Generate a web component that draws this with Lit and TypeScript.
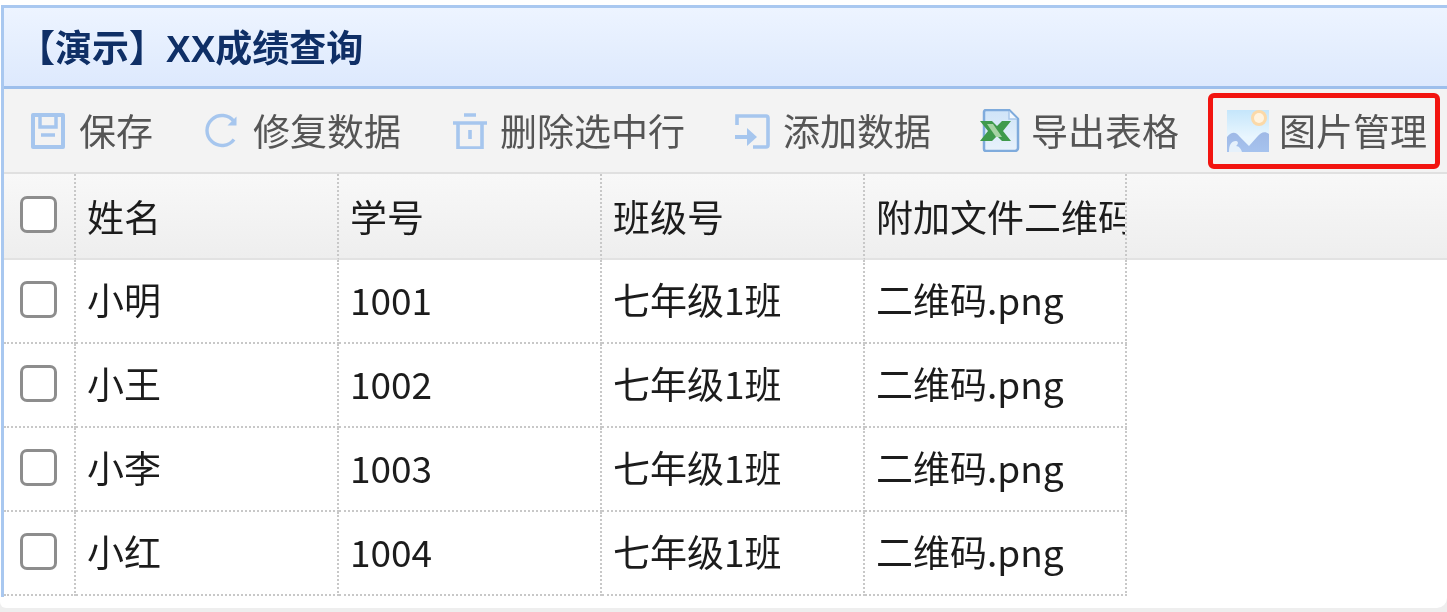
import { LitElement, html, css, svg } from "lit";
import { customElement } from "lit/decorators.js";

const blue = "#a6c6ee";
const icons: Record<string, unknown> = {
  save: svg`<svg class="ic" width="36" height="36" viewBox="0 0 36 36" fill="none" stroke="${blue}" stroke-width="4"><path d="M3 2h30v32H3z" stroke-linejoin="round"/><path d="M10 3v11h16V3" stroke-width="3.5"/><path d="M11 22h14" stroke-width="3.5"/></svg>`,
  refresh: svg`<svg class="ic" width="36" height="36" viewBox="0 0 36 36" fill="none" stroke="${blue}" stroke-width="3.4"><path d="M30 26.500a15 15 0 1 1 0-18"/><path d="M32.500 3.500v9h-9z" fill="${blue}" stroke="none"/></svg>`,
  trash: svg`<svg class="ic" width="36" height="36" viewBox="0 0 36 36" fill="none" stroke="${blue}" stroke-width="3.6"><path d="M12 2h12M1 10h34"/><path d="M6 10v25h24V10"/><path d="M18 17v9"/></svg>`,
  add: svg`<svg class="ic" width="36" height="36" viewBox="0 0 36 36" fill="none" stroke="${blue}" stroke-width="3.6"><path d="M3 12V3h29a2 2 0 0 1 2 2v27a2 2 0 0 1-2 2H19"/><path d="M1 24h15" stroke-width="4"/><path d="M13 15l10 9-10 9z" fill="${blue}" stroke="none"/></svg>`,
  excel: svg`<svg class="ic" width="41" height="43" viewBox="0 0 41 43" fill="none"><defs><linearGradient id="doc" x1="0" y1="0" x2="0" y2="1"><stop offset="0" stop-color="#cfe4f8"/><stop offset="1" stop-color="#e8f2fb"/></linearGradient></defs><path d="M5 3a2 2 0 0 1 2-2h23l9 9v29a3 3 0 0 1-3 3H7a2 2 0 0 1-2-2z" fill="url(#doc)" stroke="#7fabdc" stroke-width="2.500" stroke-linejoin="round"/><path d="M30 2v8h8" fill="#f2f8ff" stroke="#a9c8ea" stroke-width="1.500"/><path d="M1 12h12l5 5 5-5h9l-8 10 8 10h-9l-5-5-5 5H1l8-10z" fill="#3f9a4c"/><path d="M8 15h6l9 13h-6z" fill="#a6d3a4"/></svg>`,
  image: svg`<svg class="ic" width="42" height="42" viewBox="0 0 42 42"><defs><linearGradient id="sky" x1="0" y1="0" x2="0" y2="1"><stop offset="0" stop-color="#c5e6fb"/><stop offset=".65" stop-color="#e9f6fe"/></linearGradient><linearGradient id="mt" x1="0" y1="0" x2="0" y2="1"><stop offset="0" stop-color="#9fb9e6"/><stop offset="1" stop-color="#a6c3ee"/></linearGradient></defs><rect width="42" height="42" fill="url(#sky)"/><circle cx="32" cy="8" r="8" fill="#fbd9a8"/><circle cx="32" cy="8" r="5" fill="#fff3df"/><path d="M0 27c5-6 9-5 13 0l9 9 8-9c4-5 8-6 12-3v18H0z" fill="url(#mt)"/><path d="M2 42c0-7 2-11 7-11 3 0 2 4 0 5 3 0 5 3 6 6z" fill="#e6f1fb"/></svg>`,
};

const rows = [
  ["小明", "1001"],
  ["小王", "1002"],
  ["小李", "1003"],
  ["小红", "1004"],
];

@customElement("app-root")
export class AppRoot extends LitElement {
  static styles = css`
    :host {
      display: block;
      width: 1447px;
      height: 612px;
      overflow: hidden;
      background: linear-gradient(#fff 590px, #eeeeee 590px);
      font-family: "Noto Sans CJK SC", "Noto Sans", sans-serif;
      color: #1c1c1c;
      filter: blur(0.55px);
    }
    .panel {
      box-sizing: border-box;
      height: 603px;
      margin-top: 5px;
      padding-left: 4px;
      background: linear-gradient(#a9c8f0, #a9c8f0) 1px 0 / 3px 592px no-repeat, #fff;
      border-bottom-right-radius: 10px;
      border-bottom-left-radius: 6px;
    }
    .title {
      box-sizing: border-box;
      height: 84px;
      border-top: 3px solid #a9c8f0;
      border-bottom: 3px solid #9dbfec;
      background: linear-gradient(#edf4ff, #dde9fd);
      padding: 2px 0 0 14px;
      display: flex;
      align-items: center;
      font-size: 37px;
      font-weight: 700;
      color: #0f2f66;
      line-height: 1;
    }
    .latin { font-family: "Liberation Sans", sans-serif; }
    .toolbar {
      box-sizing: border-box;
      height: 85px;
      background: #f3f3f3;
      border-bottom: 2px solid #e0e0e0;
      display: flex;
      align-items: center;
      font-size: 37px;
      color: #555;
      padding-left: 26px;
    }
    .tool {
      display: flex;
      align-items: center;
      white-space: nowrap;
      line-height: 1;
    }
    .tool span { display: block; }
    .ic { flex: none; display: block; }
    .t-save { gap: 13px; margin-right: 51px; }
    .t-refresh { gap: 13px; margin-right: 51px; }
    .t-trash { gap: 12px; margin-right: 49px; }
    .t-add { gap: 13px; margin-right: 48px; }
    .t-excel { gap: 11px; margin-right: 29px; }
    .t-image { gap: 10px; }
    .mark {
      box-sizing: border-box;
      height: 76px;
      width: 232px;
      border: 5px solid #f21410;
      border-radius: 6px;
      padding-left: 14px;
      display: flex;
      align-items: center;
    }
    .grid {
      display: grid;
      grid-template-columns: 72px 263px 263px 263px 262px 1fr;
      font-size: 37px;
      line-height: 1;
      color: #1c1c1c;
    }
    .cell {
      box-sizing: border-box;
      height: 84px;
      border-right: 2px dotted #c8c8c8;
      border-bottom: 2px dotted #c8c8c8;
      display: flex;
      align-items: center;
      padding-left: 11px;
      padding-bottom: 4px;
      white-space: nowrap;
      overflow: hidden;
    }
    .check { padding-left: 16px; }
    .box {
      box-sizing: border-box;
      width: 37px;
      height: 37px;
      border: 3px solid #8d8d8d;
      border-radius: 7px;
      background: #fff;
    }
    .head {
      height: 86px;
      background: linear-gradient(#f8f8f8, #eeeeee);
      border-bottom: 2px solid #e2e2e2;
      padding-bottom: 0;
    }
    .head.check { padding-bottom: 4px; }
    .blank { border-right: none; border-bottom: none; }
    .head.blank { border-bottom: 2px solid #e2e2e2; }
  `;

  render() {
    const tool = (cls: string, icon: string, label: string) =>
      html`<div class="tool ${cls}">${icons[icon]}<span>${label}</span></div>`;
    return html`
      <div class="panel">
        <div class="title"><div>【演示】<span class="latin">XX</span>成绩查询</div></div>
        <div class="toolbar">
          ${tool("t-save", "save", "保存")}
          ${tool("t-refresh", "refresh", "修复数据")}
          ${tool("t-trash", "trash", "删除选中行")}
          ${tool("t-add", "add", "添加数据")}
          ${tool("t-excel", "excel", "导出表格")}
          <div class="mark">${tool("t-image", "image", "图片管理")}</div>
        </div>
        <div class="grid">
          <div class="cell head check"><div class="box"></div></div>
          <div class="cell head">姓名</div>
          <div class="cell head">学号</div>
          <div class="cell head">班级号</div>
          <div class="cell head">附加文件二维码</div>
          <div class="cell head blank"></div>
          ${rows.map(
            ([name, id]) => html`
              <div class="cell check"><div class="box"></div></div>
              <div class="cell">${name}</div>
              <div class="cell">${id}</div>
              <div class="cell">七年级1班</div>
              <div class="cell">二维码.png</div>
              <div class="cell blank"></div>
            `
          )}
        </div>
      </div>
    `;
  }
}
